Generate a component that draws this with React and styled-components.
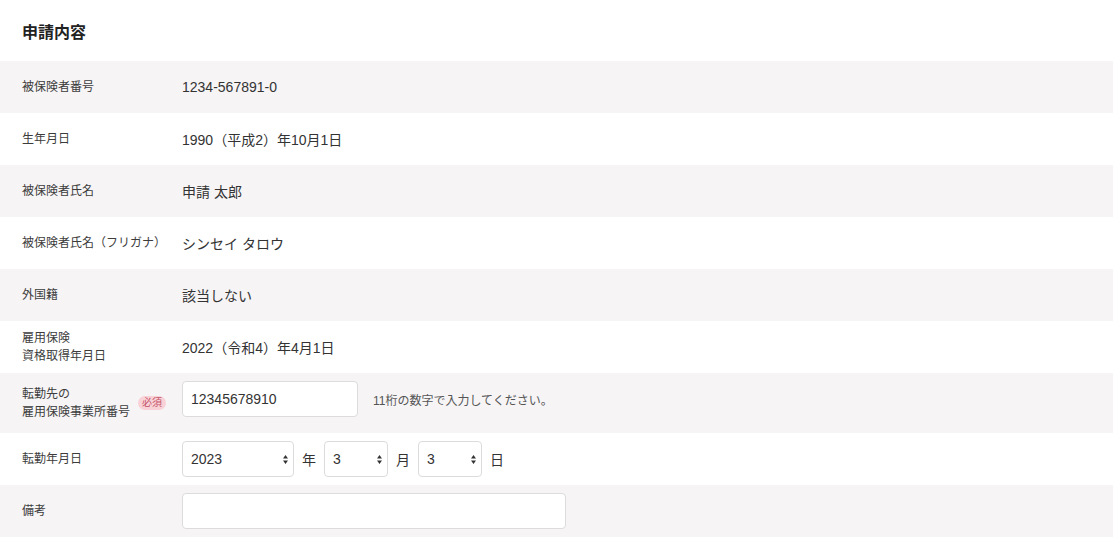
import React from "react";
import styled, { createGlobalStyle } from "styled-components";

const Global = createGlobalStyle`
  html, body { margin: 0; padding: 0; background: #fff; }
  body {
    font-family: "Liberation Sans", "Noto Sans CJK JP", sans-serif;
    color: #333;
  }
  * { box-sizing: border-box; }
`;

const Page = styled.div`
  width: 1113px;
  display: flex;
  flex-direction: column;
`;

const Title = styled.h2`
  margin: 0;
  height: 61px;
  display: flex;
  align-items: center;
  padding: 0 22px;
  font-size: 16px;
  font-weight: 700;
  color: #222;
`;

const Row = styled.div`
  display: flex;
  align-items: center;
  min-height: ${(p) => p.$h || 52}px;
  padding: 0 22px;
  background: ${(p) => (p.$shade ? "#f6f4f5" : "#fff")};
`;

const LabelCell = styled.div`
  width: 144px;
  flex: none;
  margin-right: 16px;
  display: flex;
  align-items: center;
  justify-content: space-between;
  font-size: 12px;
  line-height: 18px;
  color: #3c3c3c;
`;

const LabelText = styled.div``;

const Badge = styled.span`
  display: inline-flex;
  align-items: center;
  justify-content: center;
  height: 14px;
  padding: 0 4px;
  border-radius: 7px;
  background: #f9d2d8;
  color: #c4566a;
  font-size: 10px;
  line-height: 14px;
`;

const Value = styled.div`
  font-size: 14px;
  color: #333;
  display: flex;
  align-items: center;
  gap: 8px;
  margin-bottom: ${(p) => p.$mb || 0}px;
`;

const TextInput = styled.input`
  width: ${(p) => p.$w}px;
  height: 36px;
  border: 1px solid #dcdcdc;
  border-radius: 4px;
  background: #fff;
  padding: 0 8px;
  font-family: inherit;
  font-size: 14px;
  color: #333;
  outline: none;
`;

const Hint = styled.span`
  margin-left: 7px;
  font-size: 12px;
  color: #555;
`;

const SelectWrap = styled.div`
  position: relative;
  width: ${(p) => p.$w}px;
  height: 36px;
`;

const Select = styled.select`
  appearance: none;
  -webkit-appearance: none;
  width: 100%;
  height: 100%;
  border: 1px solid #dcdcdc;
  border-radius: 4px;
  background: #fff;
  padding: 0 8px;
  font-family: inherit;
  font-size: 14px;
  color: #333;
  outline: none;
`;

const Arrows = styled.svg`
  position: absolute;
  right: 6px;
  top: 50%;
  margin-top: -4px;
  pointer-events: none;
`;

const Unit = styled.span`
  font-size: 14px;
  color: #333;
`;

const DateSelect = ({ w, value, options }) => (
  <SelectWrap $w={w}>
    <Select defaultValue={value}>
      {options.map((o) => (
        <option key={o} value={o}>
          {o}
        </option>
      ))}
    </Select>
    <Arrows width="5" height="9" viewBox="0 0 5 9">
      <path d="M2.5 0 L5 3.5 H0 Z M2.5 9 L5 5.5 H0 Z" fill="#333" />
    </Arrows>
  </SelectWrap>
);

const range = (a, b) => Array.from({ length: b - a + 1 }, (_, i) => String(a + i));

const rows = [
  { label: "被保険者番号", value: "1234-567891-0" },
  { label: "生年月日", value: "1990（平成2）年10月1日" },
  { label: "被保険者氏名", value: "申請 太郎" },
  { label: "被保険者氏名（フリガナ）", value: "シンセイ タロウ" },
  { label: "外国籍", value: "該当しない" },
  { label: ["雇用保険", "資格取得年月日"], value: "2022（令和4）年4月1日" },
];

export default function App() {
  return (
    <Page>
      <Global />
      <Title>申請内容</Title>
      {rows.map((r, i) => (
        <Row key={i} $shade={i % 2 === 0}>
          <LabelCell>
            <LabelText>
              {Array.isArray(r.label)
                ? r.label.map((l, j) => <div key={j}>{l}</div>)
                : r.label}
            </LabelText>
          </LabelCell>
          <Value>{r.value}</Value>
        </Row>
      ))}
      <Row $shade $h={60}>
        <LabelCell>
          <LabelText>
            <div>転勤先の</div>
            <div>雇用保険事業所番号</div>
          </LabelText>
          <Badge>必須</Badge>
        </LabelCell>
        <Value $mb={8}>
          <TextInput $w={176} defaultValue="12345678910" />
          <Hint>11桁の数字で入力してください。</Hint>
        </Value>
      </Row>
      <Row>
        <LabelCell>
          <LabelText>転勤年月日</LabelText>
        </LabelCell>
        <Value>
          <DateSelect w={112} value="2023" options={range(2015, 2030)} />
          <Unit>年</Unit>
          <DateSelect w={64} value="3" options={range(1, 12)} />
          <Unit>月</Unit>
          <DateSelect w={64} value="3" options={range(1, 31)} />
          <Unit>日</Unit>
        </Value>
      </Row>
      <Row $shade>
        <LabelCell>
          <LabelText>備考</LabelText>
        </LabelCell>
        <Value>
          <TextInput $w={384} />
        </Value>
      </Row>
    </Page>
  );
}
